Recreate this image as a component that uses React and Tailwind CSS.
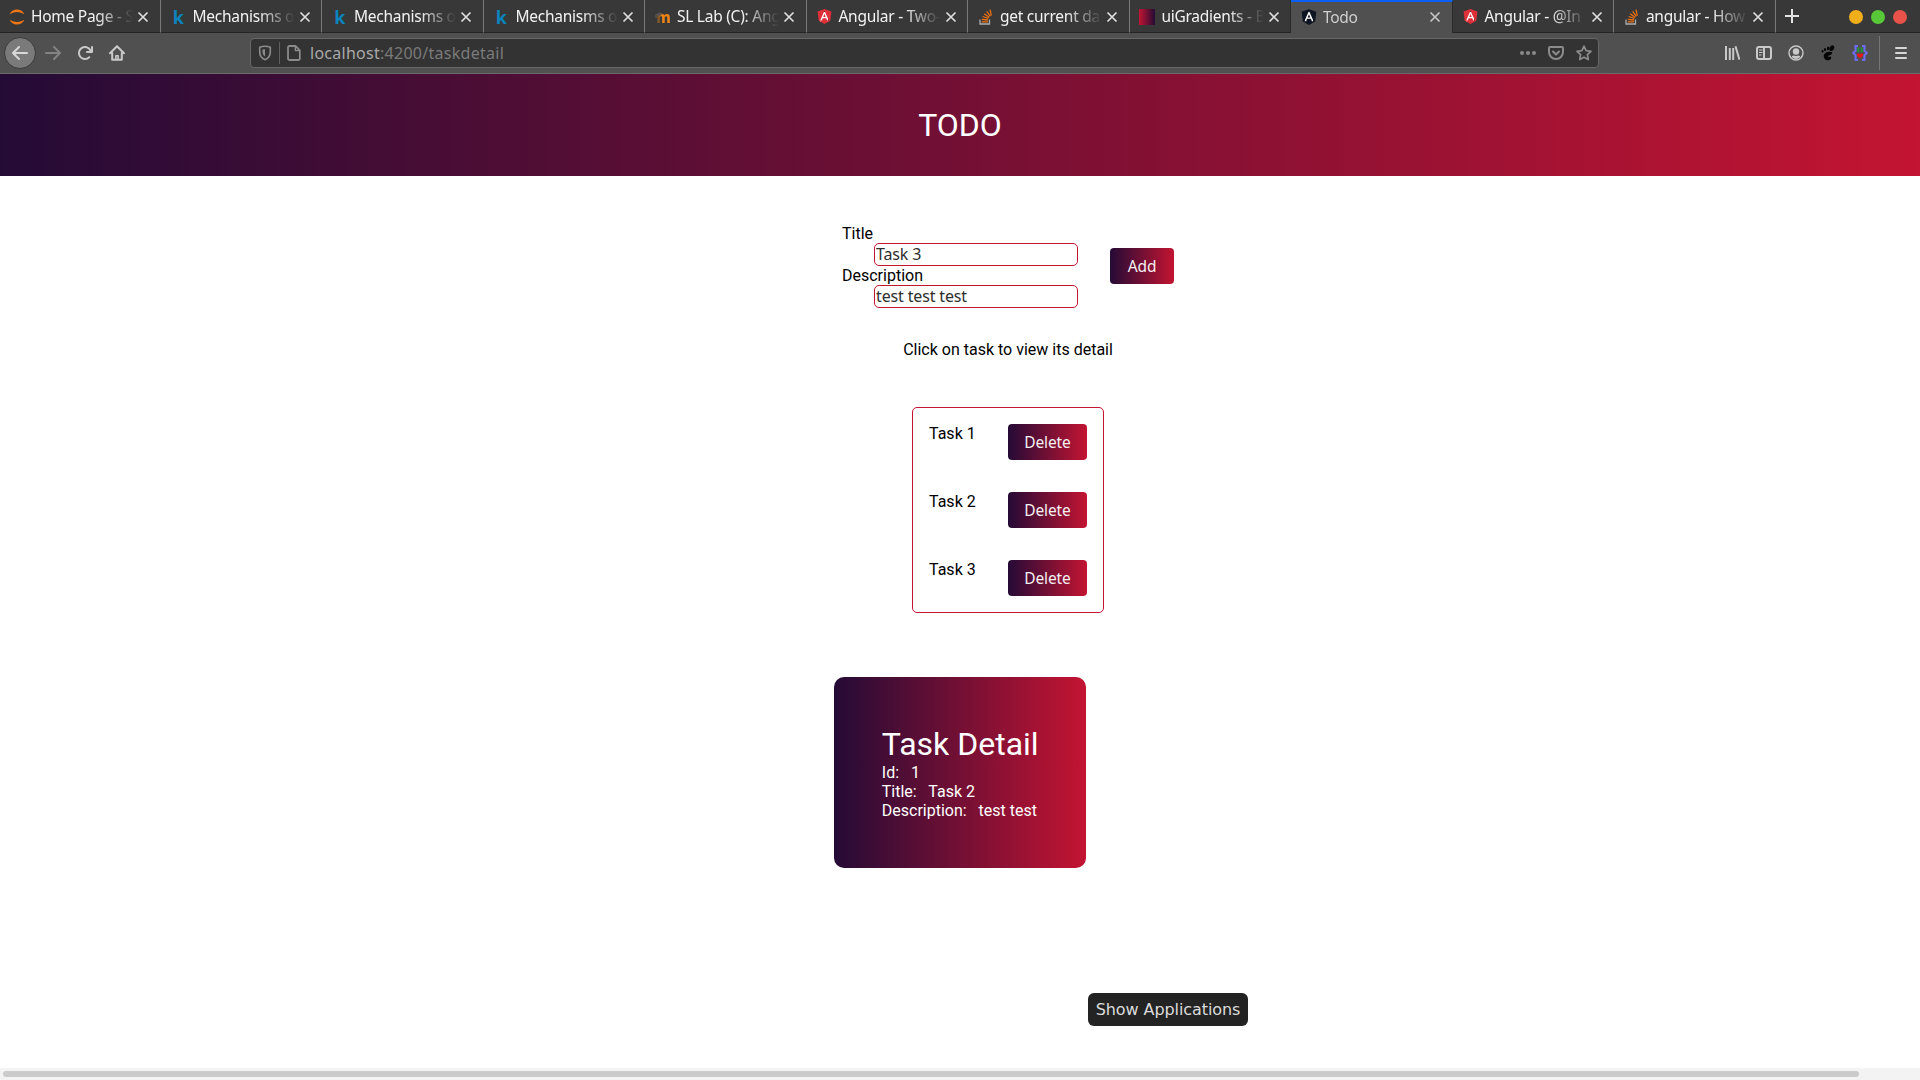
import React from 'react';
import { FaAngular } from 'react-icons/fa';

const JupyterIcon = () => (
  <svg viewBox="0 0 16 16" className="size-4" fill="#f37615">
    <path d="M.6 5.6C1.8 2.4 4.7.6 8 .6s6.200 1.800 7.400 5C13.600 4 11 3.100 8 3.100S2.400 4 .6 5.600z" />
    <path d="M.6 10.600c1.200 3.200 4.100 5 7.400 5s6.200-1.800 7.400-5c-1.800 1.600-4.400 2.500-7.400 2.500S2.400 12.200.6 10.600z" />
  </svg>
);

const KIcon = () => (
  <span className="flex h-4 w-4 items-center justify-center font-['Open_Sans',sans-serif] text-[18px] font-bold leading-[18px] text-[#0b84bd]">k</span>
);

const MoodleIcon = () => (
  <span className="relative flex h-4 w-4 items-center justify-end">
    <span className="font-['Noto_Sans',sans-serif] text-[15px] font-extrabold leading-4 text-[#ee8413] [mask-image:linear-gradient(to_right,transparent,black_40%)]">m</span>
    <svg viewBox="0 0 8 6" className="absolute left-0 top-[3px] h-1.5 w-2">
      <path d="M0 2.500 5 .5 8 1.500 4 4z" fill="#5b5350" />
      <path d="M1 3v3" stroke="#6b5a50" />
    </svg>
  </span>
);

const AngularIcon = () => (
  <span className="relative flex size-4 items-center justify-center">
    <span className="absolute h-2.5 w-2 bg-white" />
    <FaAngular className="relative size-[17px] shrink-0 text-[#dd3039]" />
  </span>
);

const AngularDarkIcon = () => (
  <span className="relative flex size-4 items-center justify-center">
    <span className="absolute h-2.5 w-2 bg-white" />
    <FaAngular className="relative size-[18px] shrink-0 text-[#0d1422]" />
  </span>
);

const StackIcon = () => (
  <svg viewBox="0 0 16 16" className="size-4" fill="none">
    <path d="M2 10.500v4.500h9.500v-4.500" stroke="#a9adb1" strokeWidth="1.300" />
    <path d="M3.700 12.800h6.200M3.900 10.300l6.100.7M4.600 7.500l5.800 2M6.200 4.700l5 3.700M8.700 2.300l3.600 5M12 .6l1.300 6" stroke="#f0700f" strokeWidth="1.300" />
  </svg>
);

const GradientIcon = () => <span className="block size-4 bg-linear-to-r/srgb from-[#c31432] to-[#240b36]" />;

const tabs = [
  { title: 'Home Page - S', icon: <JupyterIcon /> },
  { title: 'Mechanisms o', icon: <KIcon /> },
  { title: 'Mechanisms o', icon: <KIcon /> },
  { title: 'Mechanisms o', icon: <KIcon /> },
  { title: 'SL Lab (C): Ang', icon: <MoodleIcon /> },
  { title: 'Angular - Two-', icon: <AngularIcon /> },
  { title: 'get current da', icon: <StackIcon /> },
  { title: 'uiGradients - B', icon: <GradientIcon /> },
  { title: 'Todo', icon: <AngularDarkIcon />, active: true },
  { title: 'Angular - @In', icon: <AngularIcon /> },
  { title: 'angular - How', icon: <StackIcon /> },
];

function Tab({ tab, beforeActive }) {
  const edge = tab.active
    ? 'border-t-2 border-t-[#0a60f5] bg-[#505050] border-r-[#2a2a2a] pb-px'
    : beforeActive
      ? 'border-b border-b-[#242424] border-r-[#2a2a2a] pt-px'
      : 'border-b border-b-[#242424] border-r-[#797979] pt-px';
  return (
    <div className={`flex h-[33px] w-[161.5px] shrink-0 items-center border-r pl-[9.5px] pr-[8.5px] ${edge}`}>
      <span className="mr-1.5 size-4 shrink-0">{tab.icon}</span>
      <span className={`flex-1 overflow-hidden whitespace-nowrap pb-px text-[15.5px] leading-[22px] tracking-[-0.25px] [mask-image:linear-gradient(to_right,black_calc(100%-36px),transparent)] ${tab.active ? 'text-[#cfcfcf]' : 'text-[#f2f2f2]'}`}>
        {tab.title}
      </span>
      <svg viewBox="0 0 16 16" className="ml-0.5 size-4 shrink-0" stroke={tab.active ? '#c4c4c4' : '#dedede'} strokeWidth="1.700">
        <path d="M3.500 3.500l9 9M12.500 3.500l-9 9" />
      </svg>
    </div>
  );
}

function TabBar() {
  return (
    <div className="flex h-[33px] bg-[#383838]">
      <div className="-ml-[0.6px] flex">
        {tabs.map((t, i) => (
          <Tab key={i} tab={t} beforeActive={i === 7} />
        ))}
      </div>
      <div className="flex flex-1 items-center justify-between border-b border-[#242424] pl-[7.6px] pr-[13px]">
        <svg viewBox="0 0 16 16" className="size-4" stroke="#e3e3e3" strokeWidth="2">
          <path d="M8 1v14M1 8h14" />
        </svg>
        <div className="flex gap-2 pt-0.5">
          <span className="size-3.5 rounded-full bg-[#f0ae1b]" />
          <span className="size-3.5 rounded-full bg-[#57c837]" />
          <span className="size-3.5 rounded-full bg-[#e9524a]" />
        </div>
      </div>
    </div>
  );
}

function NavBar() {
  return (
    <div className="flex h-[41px] items-center border-b border-[#6b6b6b] bg-[#505050] text-[#c9c9c9]">
      <div className="flex w-[250px] items-center gap-4 pl-1">
        <span className="-mr-[3px] flex size-8 items-center justify-center rounded-full border border-[#3a3a3a] bg-[#7a7a7a] text-[#d8d8d8]">
          <svg viewBox="0 0 16 16" className="size-4" fill="currentColor">
            <path d="M15 7H3.414l4.293-4.293a1 1 0 0 0-1.414-1.414l-6 6a1 1 0 0 0 0 1.414l6 6a1 1 0 0 0 1.414-1.414L3.414 9H15a1 1 0 0 0 0-2z" />
          </svg>
        </span>
        <svg viewBox="0 0 16 16" className="-ml-1 size-4 rotate-180 text-[#838383]" fill="currentColor">
          <path d="M15 7H3.414l4.293-4.293a1 1 0 0 0-1.414-1.414l-6 6a1 1 0 0 0 0 1.414l6 6a1 1 0 0 0 1.414-1.414L3.414 9H15a1 1 0 0 0 0-2z" />
        </svg>
        <svg viewBox="0 0 16 16" className="size-4" fill="currentColor">
          <path d="M15 1a1 1 0 0 0-1 1v2.418A6.995 6.995 0 1 0 8 15a6.954 6.954 0 0 0 4.950-2.050 1 1 0 0 0-1.414-1.414A5.019 5.019 0 1 1 12.549 6H10a1 1 0 0 0 0 2h5a1 1 0 0 0 1-1V2a1 1 0 0 0-1-1z" />
        </svg>
        <svg viewBox="0 0 16 16" className="size-4" fill="none" stroke="currentColor" strokeWidth="2" strokeLinecap="round" strokeLinejoin="round">
          <path d="M1 8.200 8 1.200l7 7M3.200 8v6.800h9.600V8" />
          <path d="M6.900 14.500v-3.700h2.200v3.700" strokeWidth="1.600" />
        </svg>
      </div>
      <div className="flex h-[30px] w-[1349px] items-center rounded border border-[#686868] bg-[#333] text-[#8b8b8b]">
        <svg viewBox="0 0 16 16" className="ml-1.5 size-4" fill="none" stroke="currentColor" strokeWidth="1.600" strokeLinejoin="round">
          <path d="M8 1.300c1.800 0 3.600.3 5.300 1V7c0 3.600-2 6.400-5.300 7.700C4.700 13.400 2.700 10.600 2.700 7V2.300c1.700-.7 3.500-1 5.300-1z" />
          <path d="M8 4.200v7.300c-1.700-1-2.500-2.700-2.500-4.700V4.500z" fill="currentColor" stroke="none" />
        </svg>
        <span className="ml-1.5 h-[22px] w-px bg-[#5e5e5e]" />
        <svg viewBox="0 0 16 16" className="ml-1.5 size-4" fill="none" stroke="currentColor" strokeWidth="1.800" strokeLinejoin="round">
          <path d="M3.500 1h6l4.300 4.300v8.200A1.500 1.500 0 0 1 12.300 15H3.500A1.500 1.500 0 0 1 2 13.500v-11A1.500 1.500 0 0 1 3.500 1z" />
          <path d="M9.300 1.500v4h4" strokeWidth="1.400" />
        </svg>
        <span className="ml-2 flex-1 text-base leading-6 tracking-[0.27px] text-[#7a7a7a]">
          <span className="text-[#a9a9a9]">localhost</span>:4200/taskdetail
        </span>
        <div className="flex items-center gap-3 pr-1.5">
          <svg viewBox="0 0 16 16" className="size-4" fill="currentColor">
            <circle cx="2" cy="8" r="2" />
            <circle cx="8" cy="8" r="2" />
            <circle cx="14" cy="8" r="2" />
          </svg>
          <svg viewBox="0 0 16 16" className="size-4" fill="currentColor">
            <path d="M8 15a8 8 0 0 1-8-8V3a2 2 0 0 1 2-2h12a2 2 0 0 1 2 2v4a8 8 0 0 1-8 8zm6-12H2v4a6 6 0 0 0 12 0zM8 10.500a1 1 0 0 1-.707-.293l-3-3a1 1 0 0 1 1.414-1.414L8 8.086l2.293-2.293a1 1 0 1 1 1.414 1.414l-3 3A1 1 0 0 1 8 10.500z" />
          </svg>
          <svg viewBox="0 0 16 16" className="size-4" fill="none" stroke="currentColor" strokeWidth="1.700" strokeLinejoin="round">
            <path d="M8 1.200l2.100 4.500 4.900.6-3.600 3.400.9 4.900L8 12.200l-4.300 2.400.9-4.900L1 6.300l4.900-.6z" />
          </svg>
        </div>
      </div>
      <div className="flex flex-1 items-center justify-end gap-4">
        <svg viewBox="0 0 16 16" className="size-4" fill="none" stroke="currentColor" strokeWidth="2">
          <path d="M2 1v14M5.800 3v12M9.200 3v12" />
          <path d="M11.500 1.300l4 13.400" />
        </svg>
        <svg viewBox="0 0 16 16" className="size-4" fill="none" stroke="currentColor" strokeWidth="2">
          <rect x="1" y="2" width="14" height="12" rx="2" />
          <path d="M8 2v12" />
          <path d="M3 5h3.500M3 7.500h3.500M3 10h2.500" strokeWidth="1" />
        </svg>
        <svg viewBox="0 0 16 16" className="size-4" fill="none" stroke="currentColor">
          <circle cx="8" cy="8" r="7" strokeWidth="1.400" />
          <circle cx="8" cy="6.500" r="3.200" fill="currentColor" stroke="none" />
          <path d="M3.500 11.300c1 1.900 2.600 2.600 4.500 2.600s3.500-.7 4.500-2.600c-1.200-.7-2-.9-2.700-.9-.6.500-1.100.7-1.800.7s-1.200-.2-1.800-.7c-.7 0-1.500.2-2.700.9z" fill="currentColor" stroke="none" />
        </svg>
        <svg viewBox="0 0 16 16" className="size-4" fill="#050505">
          <ellipse cx="11.800" cy="3.200" rx="2.100" ry="3" transform="rotate(35 11.800 3.200)" />
          <ellipse cx="8.100" cy="3.300" rx="1.200" ry="1.800" transform="rotate(10 8.100 3.300)" />
          <ellipse cx="5" cy="4.500" rx="1.100" ry="1.500" />
          <ellipse cx="2.600" cy="6.200" rx="1" ry="1.300" transform="rotate(-15 2.600 6.200)" />
          <path d="M12.100 7.300C9.500 5.700 4 7.400 3.800 10.700c-.2 3 2.400 5.100 5 4.600 2.200-.4 2.900-2.500 2-3.500-.9-1-2.200.8-2.800-.1-.8-1.300 5.200-1.700 4.100-4.400z" />
        </svg>
        <svg viewBox="0 0 16 16" className="size-4" fill="none">
          <path d="M6 1H3.500v5L1 8l2.500 2v5H6M10 1h2.500v5L15 8l-2.500 2v5H10" stroke="#6c6cf0" strokeWidth="2.200" strokeLinejoin="round" />
          <path d="M6.300 2.500v4.700M9.700 2.500v4.700" stroke="#1c9a35" strokeWidth="2" />
          <path d="M5 9c1-.7 2.200-.5 3 .4.800-.9 2-1.100 3-.4.500 1.800-1.500 3.200-3 4.300C6.500 12.200 4.500 10.800 5 9z" fill="#f01414" />
        </svg>
        <span className="-ml-[5px] h-[34px] w-px bg-[#757575]" />
        <svg viewBox="0 0 16 16" className="-ml-[3px] mr-[11px] size-4" stroke="#d6d6d6" strokeWidth="2" strokeLinecap="round">
          <path d="M3 3h10M3 8h10M3 13h10" />
        </svg>
      </div>
    </div>
  );
}

function GradientButton({ children, width }) {
  return (
    <button className={`flex h-9 ${width} items-center justify-center rounded bg-linear-to-r/srgb from-[#240b36] to-[#c31432] font-['Noto_Sans',sans-serif] text-[15.5px] leading-5 tracking-[-0.1px] text-[#f4eff1]`}>
      {children}
    </button>
  );
}

function Field({ label, value }) {
  return (
    <>
      <dt className="h-[19px]">{label}</dt>
      <dd className="ml-8">
        <input
          defaultValue={value}
          className="block h-[23px] w-[204px] rounded-[5px] border border-[#c31432] bg-white px-px pb-0.5 font-['Noto_Sans',sans-serif] text-base leading-5 tracking-[-0.15px] text-[#2e2e2e] outline-none"
        />
      </dd>
    </>
  );
}

export default function App() {
  return (
    <div className="relative flex h-[1080px] w-[1920px] flex-col overflow-hidden bg-white font-['Noto_Sans',sans-serif]">
      <TabBar />
      <NavBar />
      <main className="flex flex-1 flex-col font-[Roboto,sans-serif] text-base leading-[19px] text-black">
        <header className="flex h-[102px] items-center justify-center bg-linear-to-r/srgb from-[#240b36] to-[#c31432] text-[32px] leading-[38px] text-white">
          TODO
        </header>
        <div className="flex flex-col items-center pl-24">
          <form className="mt-12 flex items-center gap-8">
            <dl>
              <Field label="Title" value="Task 3" />
              <Field label="Description" value="test test test" />
            </dl>
            <GradientButton width="w-16">Add</GradientButton>
          </form>
          <p className="mt-8">Click on task to view its detail</p>
          <ul className="mt-12 flex w-48 flex-col gap-8 rounded-[5px] border border-[#c31432] p-4">
            {['Task 1', 'Task 2', 'Task 3'].map((t) => (
              <li key={t} className="flex justify-between">
                <span>{t}</span>
                <GradientButton width="w-[79px]">Delete</GradientButton>
              </li>
            ))}
          </ul>
        </div>
        <section className="mt-16 w-[252px] self-center rounded-[10px] bg-linear-to-r/srgb from-[#240b36] to-[#c31432] py-12 pl-[47.8px] text-white">
          <h2 className="whitespace-nowrap text-[32px] leading-[38px]">Task Detail</h2>
          <p className="whitespace-pre">{'Id:   1'}</p>
          <p className="whitespace-pre">{'Title:   Task 2'}</p>
          <p className="whitespace-pre">{'Description:   test test'}</p>
        </section>
      </main>
      <div className="h-3 bg-[#f3f3f3] px-[3px] pt-[3px]">
        <div className="h-1.5 w-[1856px] rounded-full bg-[#cbcbcb]" />
      </div>
      <div className="absolute left-[1088px] top-[993px] flex h-[33px] w-40 items-center justify-center rounded-md bg-[#232323] font-['DejaVu_Sans',sans-serif] text-base tracking-[-0.08px] text-[#dcdcdc]">
        Show Applications
      </div>
    </div>
  );
}
